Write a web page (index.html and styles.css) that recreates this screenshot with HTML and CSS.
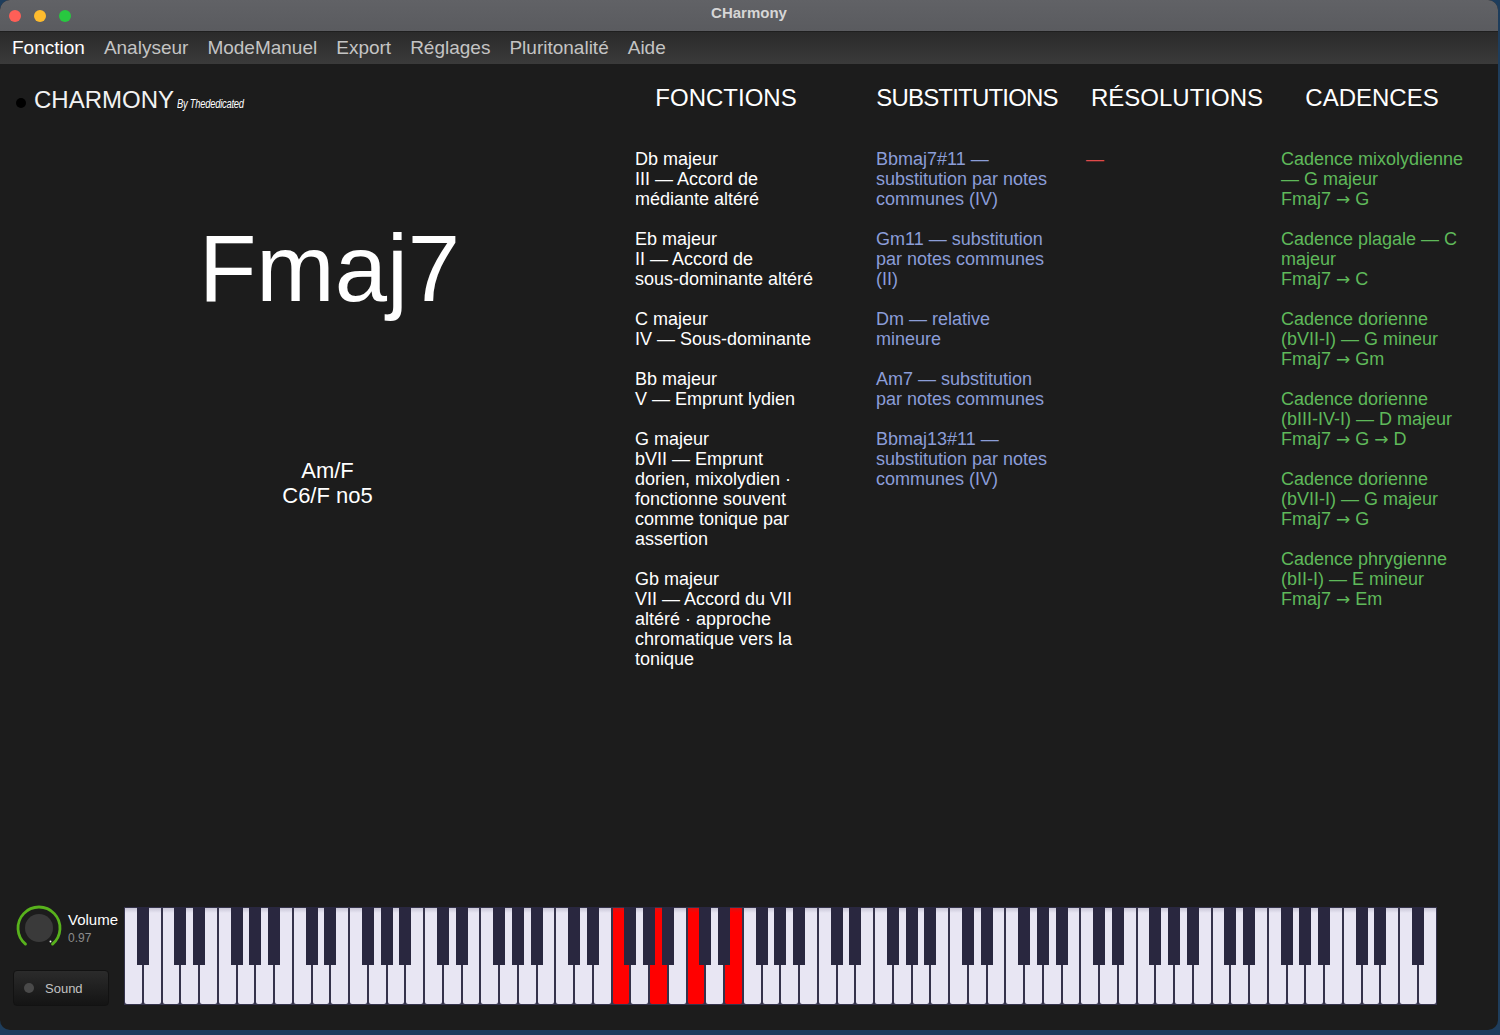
FILE: index.html
```html
<!DOCTYPE html>
<html>
<head>
    <title>CHarmony</title>
    <meta name="viewport" content="width=device-width, initial-scale=1">
    <link rel="stylesheet" href="styles.css">
</head>
<body>
    <div class="window">
        <div class="titlebar">
            <div class="lights">
                <span class="light light-red"></span>
                <span class="light light-yellow"></span>
                <span class="light light-green"></span>
            </div>
            <div class="title">CHarmony</div>
            <div></div>
        </div>

        <div class="menubar">
            <span class="menu-item active">Fonction</span>
            <span class="menu-item">Analyseur</span>
            <span class="menu-item">ModeManuel</span>
            <span class="menu-item">Export</span>
            <span class="menu-item">Réglages</span>
            <span class="menu-item">Pluritonalité</span>
            <span class="menu-item">Aide</span>
        </div>

        <div class="main">
            <div class="content">
                <div class="left">
                    <div class="logo">
                        <span class="logo-dot"></span>
                        <span class="logo-name">CHARMONY</span>
                        <span class="logo-by">By Thededicated</span>
                    </div>
                    <div class="chord">Fmaj7</div>
                    <div class="alts">Am/F<br>C6/F no5</div>
                </div>

                <div class="columns">
                    <div class="col">
                        <h2>FONCTIONS</h2>
                        <div class="item">Db majeur<br>III — Accord de<br>médiante altéré</div>
                        <div class="item">Eb majeur<br>II — Accord de<br>sous-dominante altéré</div>
                        <div class="item">C majeur<br>IV — Sous-dominante</div>
                        <div class="item">Bb majeur<br>V — Emprunt lydien</div>
                        <div class="item">G majeur<br>bVII — Emprunt<br>dorien, mixolydien ·<br>fonctionne souvent<br>comme tonique par<br>assertion</div>
                        <div class="item">Gb majeur<br>VII — Accord du VII<br>altéré · approche<br>chromatique vers la<br>tonique</div>
                    </div>
                    <div class="col col-subs">
                        <h2 class="tight">SUBSTITUTIONS</h2>
                        <div class="item">Bbmaj7#11 —<br>substitution par notes<br>communes (IV)</div>
                        <div class="item">Gm11 — substitution<br>par notes communes<br>(II)</div>
                        <div class="item">Dm — relative<br>mineure</div>
                        <div class="item">Am7 — substitution<br>par notes communes</div>
                        <div class="item">Bbmaj13#11 —<br>substitution par notes<br>communes (IV)</div>
                    </div>
                    <div class="col col-res">
                        <h2>RÉSOLUTIONS</h2>
                        <div class="item">—</div>
                    </div>
                    <div class="col col-cad">
                        <h2>CADENCES</h2>
                        <div class="item">Cadence mixolydienne<br>— G majeur<br>Fmaj7 <span class="arrow">→</span> G</div>
                        <div class="item">Cadence plagale — C<br>majeur<br>Fmaj7 <span class="arrow">→</span> C</div>
                        <div class="item">Cadence dorienne<br>(bVII-I) — G mineur<br>Fmaj7 <span class="arrow">→</span> Gm</div>
                        <div class="item">Cadence dorienne<br>(bIII-IV-I) — D majeur<br>Fmaj7 <span class="arrow">→</span> G <span class="arrow">→</span> D</div>
                        <div class="item">Cadence dorienne<br>(bVII-I) — G majeur<br>Fmaj7 <span class="arrow">→</span> G</div>
                        <div class="item">Cadence phrygienne<br>(bII-I) — E mineur<br>Fmaj7 <span class="arrow">→</span> Em</div>
                    </div>
                </div>
            </div>

            <div class="bottom">
                <div class="controls">
                    <div class="volume">
                        <svg class="knob" width="48" height="48" viewBox="0 0 48 48">
                            <path d="M10.5 40.1 A21 21 0 1 1 37.5 40.1" fill="none" stroke="#58b21c" stroke-width="2.8" stroke-linecap="round"/>
                            <circle cx="24" cy="24" r="14" fill="#3a3a3a"/>
                            <circle cx="35.5" cy="37.5" r="1" fill="#ffffff"/>
                        </svg>
                        <div class="volume-text">
                            <div class="volume-label">Volume</div>
                            <div class="volume-value">0.97</div>
                        </div>
                    </div>
                    <div class="sound">
                        <span class="sound-dot"></span>
                        <span>Sound</span>
                    </div>
                </div>
                <div class="piano" id="piano"></div>
            </div>
        </div>
    </div>

    <script>
        // 70 white keys starting on A, notes of Fmaj7 highlighted
        const names = ['A', 'B', 'C', 'D', 'E', 'F', 'G'];
        const hasSharp = { A: true, C: true, D: true, F: true, G: true };
        const pressed = [26, 28, 30, 32];
        const piano = document.getElementById('piano');

        for (let i = 0; i < 70; i++) {
            const key = document.createElement('div');
            key.className = 'white' + (pressed.includes(i) ? ' pressed' : '');
            if (i < 69 && hasSharp[names[i % 7]]) {
                const black = document.createElement('div');
                black.className = 'black';
                key.appendChild(black);
            }
            piano.appendChild(key);
        }
    </script>
</body>
</html>
```

FILE: styles.css
```css
body {
    margin: 0;
    background-color: #1e3d5c;
    font-family: 'Liberation Sans', Arial, sans-serif;
    color: #ffffff;
}
.window {
    width: 1498px;
    height: 1030px;
    display: flex;
    flex-direction: column;
    background-color: #1c1c1c;
    border-radius: 10px;
    overflow: hidden;
}
.titlebar {
    height: 31px;
    display: grid;
    grid-template-columns: 1fr auto 1fr;
    align-items: center;
    background: linear-gradient(#616266, #5a5b5f);
    border-bottom: 1px solid #1f1f1f;
}
.lights {
    display: flex;
    gap: 13px;
    padding-left: 9px;
}
.light {
    width: 12px;
    height: 12px;
    border-radius: 50%;
}
.light-red { background-color: #fe5f57; }
.light-yellow { background-color: #febc2e; }
.light-green { background-color: #28c840; }
.title {
    font-size: 15px;
    font-weight: bold;
    color: #d6d6d6;
    margin-top: -6px;
}
.menubar {
    height: 32px;
    display: flex;
    align-items: center;
    gap: 19px;
    padding-left: 12px;
    background: linear-gradient(#2a2a2a, #3a3a3a);
}
.menu-item {
    font-size: 19px;
    color: #c4c4c4;
}
.menu-item.active {
    color: #ffffff;
}
.main {
    flex: 1;
    display: flex;
    flex-direction: column;
}
.content {
    flex: 1;
    display: flex;
}
.left {
    width: 635px;
    padding-top: 22px;
}
.logo {
    display: flex;
    align-items: baseline;
    padding-left: 16px;
    line-height: 28px;
}
.logo-dot {
    width: 10px;
    height: 10px;
    border-radius: 50%;
    background-color: #000000;
    margin-right: 8px;
    align-self: center;
    margin-top: 2px;
}
.logo-name {
    font-size: 24px;
    color: #f2f2f2;
}
.logo-by {
    display: inline-block;
    font-style: italic;
    font-size: 12px;
    margin-left: 3px;
    letter-spacing: -0.3px;
    transform: scaleX(0.78);
    transform-origin: left;
}
.chord {
    margin-top: 104px;
    font-size: 94px;
    line-height: 94px;
    text-align: center;
    padding-left: 24px;
}
.alts {
    margin-top: 142px;
    font-size: 22px;
    line-height: 25px;
    text-align: center;
    padding-left: 20px;
}
.columns {
    flex: 1;
    display: grid;
    grid-template-columns: 241px 210px 195px 1fr;
    align-content: start;
    padding-top: 20px;
}
.col h2 {
    width: 182px;
    margin: 0 0 37px 0;
    font-size: 24px;
    line-height: 28px;
    font-weight: normal;
    text-align: center;
    white-space: nowrap;
}
.col h2.tight {
    letter-spacing: -0.8px;
}
.item {
    font-size: 18px;
    line-height: 20px;
    margin-bottom: 20px;
    white-space: nowrap;
}
.arrow {
    font-family: 'DejaVu Sans', sans-serif;
    font-size: 17px;
    line-height: 0;
}
.col-subs .item { color: #8b9dd8; }
.col-res .item { color: #e04a4a; }
.col-cad .item { color: #5fb95a; }
.bottom {
    display: flex;
    align-items: flex-end;
    padding: 0 0 25px 13px;
}
.controls {
    width: 111px;
}
.volume {
    display: flex;
    margin-left: 2px;
}
.knob {
    display: block;
}
.volume-text {
    padding-top: 7px;
    margin-left: 5px;
}
.volume-label {
    font-size: 15px;
    line-height: 18px;
    color: #ffffff;
}
.volume-value {
    font-size: 12px;
    line-height: 15px;
    color: #8c8c8c;
    margin-top: 2px;
}
.sound {
    width: 96px;
    height: 36px;
    box-sizing: border-box;
    margin-top: 18px;
    margin-bottom: -1px;
    display: flex;
    align-items: center;
    padding-left: 10px;
    gap: 11px;
    border-radius: 4px;
    background: linear-gradient(#2b2b2b, #141414);
    border: 1px solid #121212;
    font-size: 13px;
    color: #c2c2c2;
}
.sound-dot {
    width: 10px;
    height: 10px;
    border-radius: 50%;
    background-color: #4a4a4a;
}
.piano {
    width: 1313px;
    height: 98px;
    box-sizing: border-box;
    display: flex;
    gap: 2px;
    padding: 1px;
    background-color: #35334b;
}
.white {
    flex: 1;
    position: relative;
    background: linear-gradient(#c9c7d8, #e8e6f3 5px);
    border-radius: 0 0 2px 2px;
}
.white.pressed {
    background: linear-gradient(#e01010, #ff0000 5px);
}
.black {
    position: absolute;
    top: -1px;
    right: -7px;
    width: 12px;
    height: 58px;
    background-color: #29273f;
    z-index: 1;
}
```
